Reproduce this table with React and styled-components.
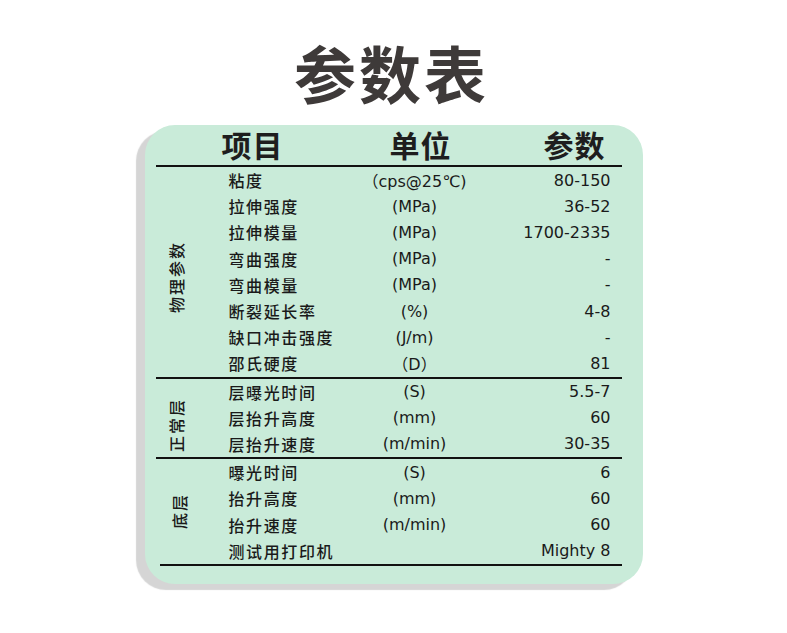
import React from "react";
import styled, { createGlobalStyle } from "styled-components";

const Global = createGlobalStyle`
  html, body { margin: 0; padding: 0; background: #ffffff; }
  body { font-family: "DejaVu Sans", "Noto Sans CJK SC", sans-serif; }
`;

const Page = styled.div`
  width: 787px;
  height: 633px;
  display: flex;
  flex-direction: column;
  align-items: center;
  padding-top: 40px;
  box-sizing: border-box;
`;

const Title = styled.h1`
  margin: 0;
  font-family: "Noto Sans CJK SC", sans-serif;
  font-weight: 700;
  font-size: 62px;
  line-height: 64px;
  letter-spacing: 3px;
  color: #3e3a39;
  transform: translateX(-2px);
`;

const Card = styled.div`
  margin-top: 21px;
  width: 498px;
  height: 459px;
  box-sizing: border-box;
  background: #c9ebd9;
  border-radius: 30px;
  box-shadow: -9px 6px 1px #d5d5d5;
  padding: 0 21px 0 11px;
  display: flex;
  flex-direction: column;
`;

const HeaderRow = styled.div`
  height: 40px;
  display: grid;
  grid-template-columns: 194px 142px 1fr;
  align-items: center;
  border-bottom: 2px solid #111;
  font-family: "Noto Sans CJK SC", sans-serif;
  font-weight: 700;
  font-size: 30px;
  line-height: 40px;
  color: #1e1e1e;
  letter-spacing: 1px;
`;

const HeadCell = styled.div`
  text-align: ${(p) => p.$align || "center"};
  padding-right: ${(p) => (p.$align === "right" ? "16px" : "0")};
  transform: translateY(-1px);
`;

const Group = styled.div`
  display: flex;
  border-bottom: 2px solid #111;
  margin-left: ${(p) => (p.$inset ? "4px" : "0")};
`;

const SideLabel = styled.div`
  width: 40px;
  display: flex;
  align-items: center;
  justify-content: center;
  padding-top: ${(p) => p.$shift || 0}px;
  box-sizing: border-box;
`;

const SideText = styled.span`
  font-family: "Noto Sans CJK SC", sans-serif;
  font-weight: 500;
  font-size: 16px;
  letter-spacing: 2px;
  color: #1a1a1a;
  white-space: nowrap;
  transform: rotate(-90deg);
  display: inline-block;
`;

const Rows = styled.div`
  flex: 1;
  display: flex;
  flex-direction: column;
`;

const Row = styled.div`
  height: 26.2px;
  display: grid;
  grid-template-columns: 131px 110px 1fr;
  align-items: center;
  padding-left: ${(p) => (p.$inset ? "29px" : "33px")};
  padding-right: 11px;
  font-size: 16px;
  color: #1a1a1a;
`;

const Name = styled.div`
  font-family: "Noto Sans CJK SC", sans-serif;
  font-weight: 500;
  letter-spacing: 1.6px;
  white-space: nowrap;
`;

const Unit = styled.div`
  font-family: "DejaVu Sans", "Noto Sans CJK SC", sans-serif;
  text-align: center;
  white-space: nowrap;
`;

const Value = styled.div`
  font-family: "DejaVu Sans", sans-serif;
  text-align: right;
  white-space: nowrap;
`;

const groups = [
  {
    label: "物理参数",
    shift: 10,
    rows: [
      ["粘度", "（cps@25℃)", "80-150"],
      ["拉伸强度", "(MPa)", "36-52"],
      ["拉伸模量", "(MPa)", "1700-2335"],
      ["弯曲强度", "(MPa)", "-"],
      ["弯曲模量", "(MPa)", "-"],
      ["断裂延长率", "(%)", "4-8"],
      ["缺口冲击强度", "(J/m)", "-"],
      ["邵氏硬度", "（D）", "81"],
    ],
  },
  {
    label: "正常层",
    shift: 14,
    rows: [
      ["层曝光时间", "(S)", "5.5-7"],
      ["层抬升高度", "(mm)", "60"],
      ["层抬升速度", "(m/min)", "30-35"],
    ],
  },
  {
    label: "底层",
    shift: 0,
    inset: true,
    rows: [
      ["曝光时间", "(S)", "6"],
      ["抬升高度", "(mm)", "60"],
      ["抬升速度", "(m/min)", "60"],
      ["测试用打印机", "", "Mighty 8"],
    ],
  },
];

export default function App() {
  return (
    <>
      <Global />
      <Page>
        <Title>参数表</Title>
        <Card>
          <HeaderRow>
            <HeadCell>项目</HeadCell>
            <HeadCell>单位</HeadCell>
            <HeadCell $align="right">参数</HeadCell>
          </HeaderRow>
          {groups.map((g) => (
            <Group key={g.label} $inset={g.inset}>
              <SideLabel $shift={g.shift}>
                <SideText>{g.label}</SideText>
              </SideLabel>
              <Rows>
                {g.rows.map((r) => (
                  <Row key={r[0]} $inset={g.inset}>
                    <Name>{r[0]}</Name>
                    <Unit>{r[1]}</Unit>
                    <Value>{r[2]}</Value>
                  </Row>
                ))}
              </Rows>
            </Group>
          ))}
        </Card>
      </Page>
    </>
  );
}
